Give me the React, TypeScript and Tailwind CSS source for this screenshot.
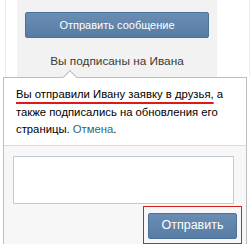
export default function App() {
  return (
    <div className="w-[251px] h-[244px] overflow-hidden bg-white font-['Liberation_Sans',Arial,sans-serif] text-[12px]">
      {/* верхний блок профиля */}
      <div className="ml-[5px] w-[245px] h-[77px] border-x border-[#ececec]">
        <div className="ml-[11px] w-[200px] h-full bg-[#f2f2f2] pt-[12px] px-[8px]">
          <button className="w-[184px] h-[26px] rounded-[2px] border border-[#4d7198] bg-gradient-to-b from-[#6b8db4] to-[#577ca4] text-white text-[11px]">
            Отправить сообщение
          </button>
          <p className="mt-[15px] text-center text-[#3a3a3a] text-[11.8px]">Вы подписаны на Ивана</p>
        </div>
      </div>

      {/* всплывающее окно */}
      <div className="relative ml-[3px] w-[244px] h-[200px] border border-[#bdbdbd] bg-white">
        <div className="absolute -top-[6px] left-[61px] w-[10px] h-[10px] rotate-45 border-l border-t border-[#bdbdbd] bg-white" />
        <p className="relative px-[12px] pt-[8px] pb-[6px] leading-[17.5px] text-[11.3px] text-[#000]">
          <span className="underline decoration-[#dd1a1a] decoration-[1.5px] underline-offset-[4px]">Вы отправили Ивану заявку в друзья,</span> а
          также подписались на обновления его страницы. <span className="text-[#2f6878]">Отмена</span>.
        </p>
        <div className="border-t border-[#dadada] bg-[#f7f7f7] h-full pt-[10px]">
          <div className="ml-[9px] w-[221px] h-[48px] border border-[#c3cbd4] bg-white" />
          <div className="flex justify-end pr-[4px] mt-[2px]">
            <div className="border border-[#d42020] px-[4px] pt-[6px] pb-[4px]">
              <button className="w-[89px] h-[26px] rounded-[2px] border border-[#4d7198] bg-gradient-to-b from-[#6b8db4] to-[#577ca4] text-white text-[12.5px]">
                Отправить
              </button>
            </div>
          </div>
        </div>
      </div>
    </div>
  )
}
